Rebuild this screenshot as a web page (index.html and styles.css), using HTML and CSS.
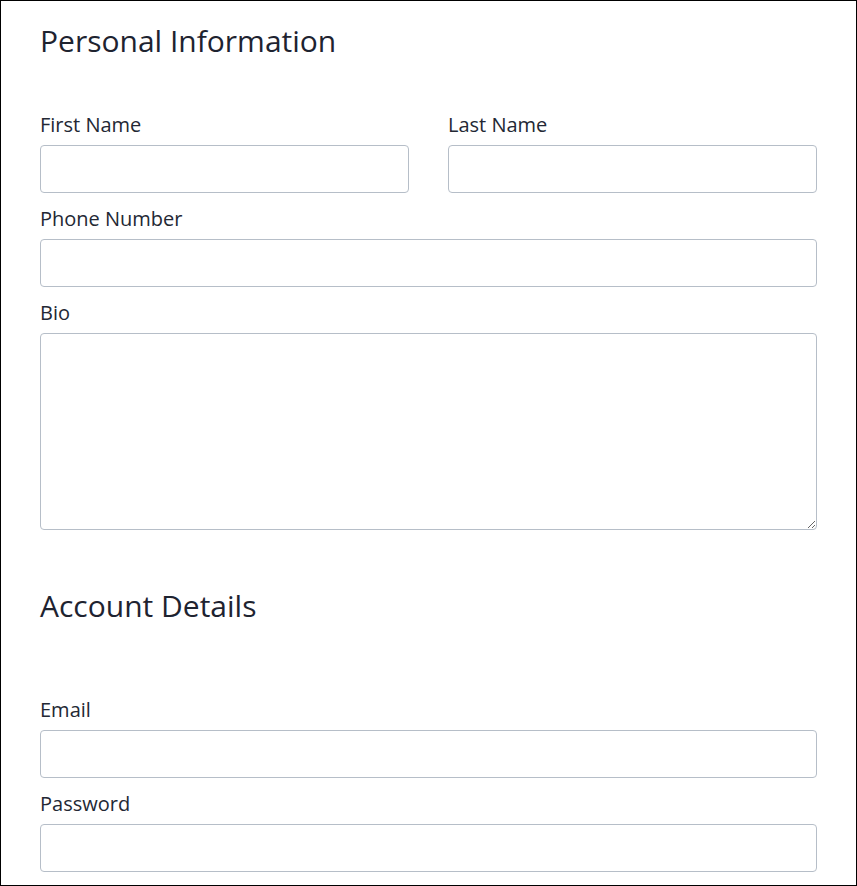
FILE: index.html
```html
<!DOCTYPE html>
<html lang="en">
<head>
<meta charset="utf-8">
<title>Personal Information</title>
<link rel="stylesheet" href="styles.css">
</head>
<body>
<div class="page">
  <section class="section">
    <h2 class="section-title">Personal Information</h2>
    <div class="row">
      <div class="field">
        <label class="label" for="first">First Name</label>
        <input class="input" id="first" type="text">
      </div>
      <div class="field">
        <label class="label" for="last">Last Name</label>
        <input class="input" id="last" type="text">
      </div>
    </div>
    <div class="field">
      <label class="label" for="phone">Phone Number</label>
      <input class="input" id="phone" type="tel">
    </div>
    <div class="field">
      <label class="label" for="bio">Bio</label>
      <textarea class="input textarea" id="bio"></textarea>
    </div>
  </section>
  <section class="section section-account">
    <h2 class="section-title section-title-account">Account Details</h2>
    <div class="field">
      <label class="label" for="email">Email</label>
      <input class="input" id="email" type="email">
    </div>
    <div class="field">
      <label class="label" for="password">Password</label>
      <input class="input" id="password" type="password">
    </div>
  </section>
</div>
</body>
</html>
```
FILE: styles.css
```css
html, body {
  margin: 0;
  padding: 0;
  background: #ffffff;
}

body {
  font-family: "Open Sans", "Liberation Sans", sans-serif;
  color: #212529;
}

.page {
  box-sizing: border-box;
  height: 100vh;
  border: 1px solid #000000;
  padding: 22px 39px 0;
  overflow: hidden;
}

.section-title {
  margin: 0 0 51px;
  font-size: 30px;
  line-height: 36px;
  font-weight: 400;
  color: #1e2330;
}

.section-account {
  margin-top: 58px;
}

.section-title-account {
  margin-bottom: 71px;
}

.row {
  display: grid;
  grid-template-columns: 1fr 1fr;
  column-gap: 39px;
}

.field {
  display: flex;
  flex-direction: column;
  margin-bottom: 11px;
}

.section .field:last-child {
  margin-bottom: 0;
}

.row .field {
  margin-bottom: 11px;
}

.label {
  font-size: 20px;
  line-height: 30px;
  margin-bottom: 5px;
  color: #232834;
}

.input {
  box-sizing: border-box;
  display: block;
  width: 100%;
  height: 48px;
  margin: 0;
  padding: 6px 12px;
  border: 1px solid #b6bec8;
  border-radius: 4px;
  background: #ffffff;
  font-family: inherit;
  font-size: 16px;
  color: #212529;
}

.textarea {
  height: 197px;
  resize: vertical;
}
```
